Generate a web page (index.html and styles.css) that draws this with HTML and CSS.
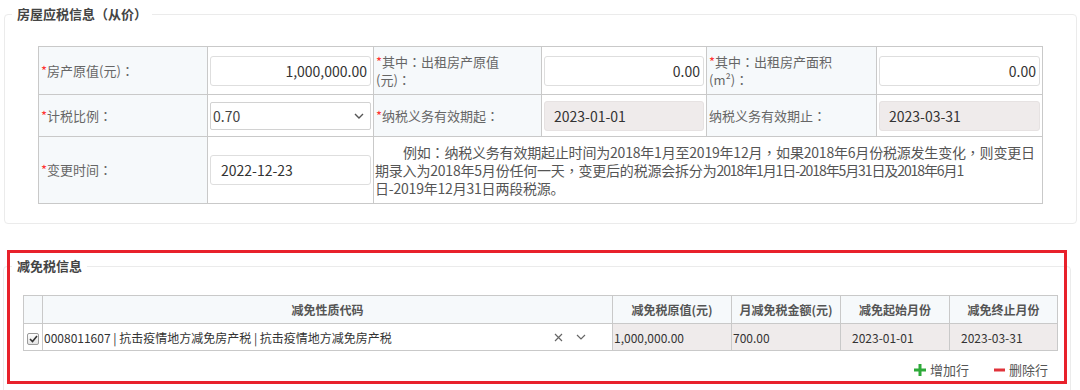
FILE: index.html
```html
<!DOCTYPE html>
<html lang="zh-CN">
<head>
  <meta charset="UTF-8">
  <title>房屋应税信息</title>
  <link rel="stylesheet" href="styles.css">
</head>
<body>

  <!-- 房屋应税信息 -->
  <fieldset class="panel panel-house">
    <legend>房屋应税信息<span class="p" lang="zh-TW">（</span>从价<span class="p" lang="zh-TW">）</span></legend>
    <div class="panel-body house-body">
      <table class="form-table">
        <colgroup>
          <col class="w169"><col class="w166"><col class="w168"><col class="w165"><col class="w170"><col class="w166">
        </colgroup>
        <tr class="row-1">
          <td class="label"><span class="req">*</span>房产原值(元)<span class="p" lang="zh-TW">：</span></td>
          <td class="field"><input class="input num" type="text" value="1,000,000.00"></td>
          <td class="label"><span class="req">*</span>其中<span class="p" lang="zh-TW">：</span>出租房产原值<br>(元)<span class="p" lang="zh-TW">：</span></td>
          <td class="field"><input class="input num" type="text" value="0.00"></td>
          <td class="label"><span class="req">*</span>其中<span class="p" lang="zh-TW">：</span>出租房产面积<br>(m²)<span class="p" lang="zh-TW">：</span></td>
          <td class="field"><input class="input num" type="text" value="0.00"></td>
        </tr>
        <tr class="row-2">
          <td class="label"><span class="req">*</span>计税比例<span class="p" lang="zh-TW">：</span></td>
          <td class="field">
            <div class="select">
              <span>0.70</span>
              <svg width="10" height="6" viewBox="0 0 10 6"><polyline points="1,1 5,5 9,1" fill="none" stroke="#555" stroke-width="1.4"/></svg>
            </div>
          </td>
          <td class="label"><span class="req">*</span>纳税义务有效期起<span class="p" lang="zh-TW">：</span></td>
          <td class="field"><input class="input readonly" type="text" value="2023-01-01" readonly></td>
          <td class="label">纳税义务有效期止<span class="p" lang="zh-TW">：</span></td>
          <td class="field"><input class="input readonly" type="text" value="2023-03-31" readonly></td>
        </tr>
        <tr class="row-3">
          <td class="label"><span class="req">*</span>变更时间<span class="p" lang="zh-TW">：</span></td>
          <td class="field"><input class="input date" type="text" value="2022-12-23"></td>
          <td class="note" colspan="4">例如<span class="p" lang="zh-TW">：</span>纳税义务有效期起止时间为2018年1月至2019年12月<span class="p" lang="zh-TW">，</span>如果2018年6月份税源发生变化<span class="p" lang="zh-TW">，</span>则变更日<br>期录入为2018年5月份任何一天<span class="p" lang="zh-TW">，</span>变更后的税源会拆分为<span class="tight">2018年1月1日-2018年5月31日及2018年6月1</span><br>日-2019年12月31日两段税源。</td>
        </tr>
      </table>
    </div>
  </fieldset>

  <!-- 减免税信息 -->
  <fieldset class="panel panel-relief">
    <legend>减免税信息</legend>
    <div class="panel-body relief-body">
      <table class="grid">
        <colgroup>
          <col class="w19"><col class="w570"><col class="w119"><col class="w109"><col class="w109"><col class="w108">
        </colgroup>
        <tr class="grid-head">
          <th></th>
          <th>减免性质代码</th>
          <th>减免税原值(元)</th>
          <th>月减免税金额(元)</th>
          <th>减免起始月份</th>
          <th>减免终止月份</th>
        </tr>
        <tr class="grid-row">
          <td class="cell-check">
            <span class="check">
              <svg width="9" height="8" viewBox="0 0 9 8"><polyline points="1,4 3.5,6.5 8,1" fill="none" stroke="#333" stroke-width="1.6"/></svg>
            </span>
          </td>
          <td>
            <div class="code-wrap">
              <span>0008011607 | 抗击疫情地方减免房产税 | 抗击疫情地方减免房产税</span>
              <span class="code-tools">
                <svg width="9" height="9" viewBox="0 0 9 9"><path d="M1 1 L8 8 M8 1 L1 8" stroke="#666" stroke-width="1.2"/></svg>
                <svg width="10" height="6" viewBox="0 0 10 6"><polyline points="1,1 5,5 9,1" fill="none" stroke="#666" stroke-width="1.2"/></svg>
              </span>
            </div>
          </td>
          <td class="ro">1,000,000.00</td>
          <td class="ro">700.00</td>
          <td class="ro pad">2023-01-01</td>
          <td class="ro pad">2023-03-31</td>
        </tr>
      </table>

      <div class="grid-actions">
        <a class="action" href="#">
          <svg width="14" height="14" viewBox="0 0 14 14"><path d="M7 1 V13 M1 7 H13" stroke="#2eaa3a" stroke-width="3"/></svg>增加行
        </a>
        <a class="action" href="#">
          <svg width="13" height="14" viewBox="0 0 13 14"><path d="M1 7 H12" stroke="#e0333a" stroke-width="3"/></svg>删除行
        </a>
      </div>
    </div>
  </fieldset>

  <!-- 标注框 -->
  <div class="highlight"></div>

</body>
</html>
```

FILE: styles.css
```css
/* General Reset */
* {
  box-sizing: border-box;
}

body {
  position: relative;
  margin: 0;
  font-family: "Noto Sans CJK SC", "Microsoft YaHei", sans-serif;
  color: #333;
  background-color: #fff;
  overflow: hidden;
}

/* centered full-width punctuation */
.p {
  font-family: "Noto Sans CJK TC", sans-serif;
}

/* Panels */
.panel {
  min-width: 0;
  padding: 0;
  border: 1px solid #ebebeb;
  border-radius: 4px;
}

.panel legend {
  margin-left: 7px;
  padding: 0 5px;
  font-size: 13px;
  font-weight: bold;
  line-height: 20px;
  color: #444;
}

.panel-house {
  margin: 4px 3px 0 4px;
}

.house-body {
  padding: 22px 0 19px 33px;
}

.panel-relief {
  margin: 32px 9px 0 3px;
}

.panel-relief legend {
  margin-left: 8px;
}

.relief-body {
  padding: 19px 13px 30px 19px;
}

/* Form table */
.form-table {
  border-collapse: collapse;
  table-layout: fixed;
  width: 1004px;
  font-size: 13px;
}

.w169 { width: 169px; }
.w166 { width: 166px; }
.w168 { width: 168px; }
.w165 { width: 165px; }
.w170 { width: 170px; }

.form-table td {
  border: 1px solid #c9c9c9;
  padding: 0;
  vertical-align: middle;
}

.form-table .row-1 td { height: 48px; }
.form-table .row-2 td { height: 42px; }
.form-table .row-3 td { height: 67px; }

.form-table .label {
  padding-left: 2px;
  background-color: #f6f9fb;
  color: #666;
  line-height: 18px;
}

.req {
  color: #f33;
}

.form-table .field {
  padding: 0 2px;
}

.input {
  display: block;
  width: 100%;
  height: 30px;
  padding: 0 3px;
  border: 1px solid #dedede;
  border-radius: 3px;
  font-family: inherit;
  font-size: 14px;
  color: #333;
  background-color: #fff;
  outline: none;
}

.input.num {
  text-align: right;
}

.input.readonly {
  padding-left: 9px;
  background-color: #efebeb;
  border-color: #e6e2e2;
}

.input.date {
  padding-left: 10px;
}

.select {
  display: flex;
  justify-content: space-between;
  align-items: center;
  height: 28px;
  padding: 0 6px 0 2px;
  border: 1px solid #d2d2d2;
  border-radius: 2px;
  font-size: 14px;
  color: #444;
  background-color: #fff;
}

.form-table .note {
  padding: 4px 2px 5px 1px;
  text-indent: 2em;
  font-size: 14px;
  letter-spacing: -0.2px;
  line-height: 18px;
  color: #555;
  white-space: nowrap;
  overflow: hidden;
}

.note .tight {
  letter-spacing: -1.1px;
}

/* Relief grid */
.grid {
  border-collapse: collapse;
  table-layout: fixed;
  width: 1034px;
  font-size: 12px;
}

.w19 { width: 19px; }
.w570 { width: 570px; }
.w119 { width: 119px; }
.w109 { width: 109px; }
.w108 { width: 108px; }

.grid th,
.grid td {
  border: 1px solid #c9c9c9;
  padding: 0;
}

.grid-head th {
  height: 28px;
  background-color: #f6f9fb;
  font-weight: bold;
  color: #555;
  text-align: center;
}

.grid-row td {
  height: 27px;
  font-size: 12px;
  color: #333;
  vertical-align: middle;
}

.cell-check {
  text-align: center;
}

.check {
  display: inline-flex;
  justify-content: center;
  align-items: center;
  width: 12px;
  height: 12px;
  border: 1px solid #9a9a9a;
  border-radius: 2px;
  background: linear-gradient(#fff, #e4e4e4);
  vertical-align: middle;
}

.code-wrap {
  display: flex;
  justify-content: space-between;
  align-items: center;
  padding-left: 1px;
}

.code-tools {
  display: flex;
  align-items: center;
  gap: 13px;
  padding-right: 26px;
}

.grid .ro {
  background-color: #efebeb;
  padding-left: 1px;
}

.grid .ro.pad {
  padding-left: 11px;
}

/* Add / delete row */
.grid-actions {
  display: flex;
  justify-content: flex-end;
  gap: 24px;
  margin-top: 9px;
  padding-right: 9px;
}

.action {
  display: flex;
  align-items: center;
  gap: 3px;
  font-size: 13px;
  line-height: 20px;
  color: #555;
  text-decoration: none;
}

/* Red annotation box */
.highlight {
  position: absolute;
  left: 7px;
  top: 250px;
  width: 1060px;
  height: 134px;
  border: 3px solid #e8212b;
  pointer-events: none;
}
```
